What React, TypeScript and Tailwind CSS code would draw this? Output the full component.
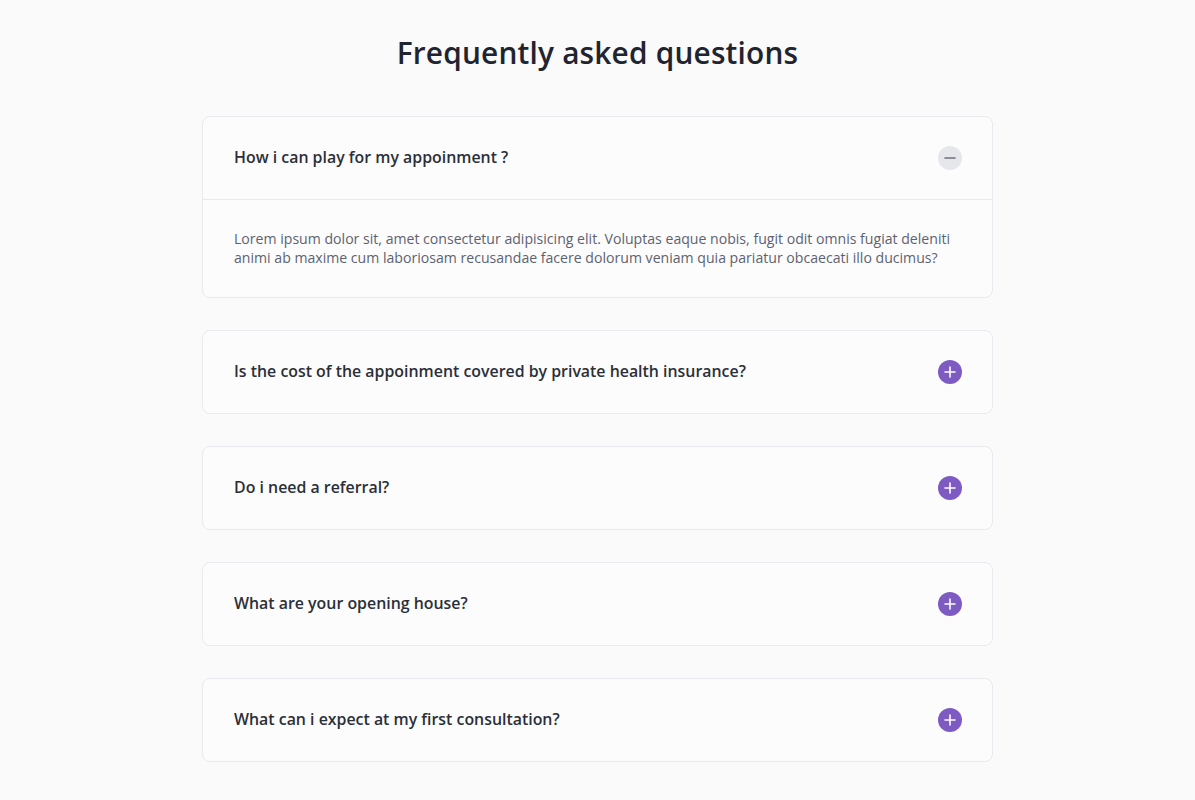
import { useState } from "react";

const answer =
  "Lorem ipsum dolor sit, amet consectetur adipisicing elit. Voluptas eaque nobis, fugit odit omnis fugiat deleniti animi ab maxime cum laboriosam recusandae facere dolorum veniam quia pariatur obcaecati illo ducimus?";

const faqs = [
  { q: "How i can play for my appoinment ?", a: answer },
  { q: "Is the cost of the appoinment covered by private health insurance?", a: answer },
  { q: "Do i need a referral?", a: answer },
  { q: "What are your opening house?", a: answer },
  { q: "What can i expect at my first consultation?", a: answer },
];

function ToggleIcon({ open }: { open: boolean }) {
  if (open) {
    return (
      <span className="w-6 h-6 rounded-full bg-[#e5e7eb] flex items-center justify-center">
        <svg width="12" height="12" viewBox="0 0 12 12">
          <path d="M1 6h10" stroke="#6b7280" strokeWidth="1.6" strokeLinecap="round" />
        </svg>
      </span>
    );
  }
  return (
    <span className="w-6 h-6 rounded-full bg-[#7e5bc2] flex items-center justify-center">
      <svg width="12" height="12" viewBox="0 0 12 12">
        <path d="M1 6h10M6 1v10" stroke="#ffffff" strokeWidth="1.6" strokeLinecap="round" />
      </svg>
    </span>
  );
}

export default function App() {
  const [openIndex, setOpenIndex] = useState<number | null>(0);

  return (
    <div
      className="min-h-screen bg-[#fafafa] pt-[34px] pb-10"
      style={{ fontFamily: "'Open Sans', 'Noto Sans', Arial, sans-serif" }}
    >
      <h1 className="text-center text-[29.8px] leading-[38px] font-semibold text-[#1f2430] tracking-[0.2px]">
        Frequently asked questions
      </h1>

      <div className="w-[791px] mx-auto mt-[44px] flex flex-col gap-[32px]">
        {faqs.map((item, i) => {
          const open = openIndex === i;
          return (
            <div key={i} className="bg-[#fcfcfd] border border-[#e9eaee] rounded-[8px]">
              <button
                className="w-full flex items-center justify-between pl-[31px] pr-[30px] h-[82px] text-left"
                onClick={() => setOpenIndex(open ? null : i)}
              >
                <span className="text-[15.9px] font-semibold text-[#2b2f38]">{item.q}</span>
                <ToggleIcon open={open} />
              </button>
              {open && (
                <div className="border-t border-[#e9eaee] pl-[31px] pr-[28px] pt-[30px] pb-[30px]">
                  <p className="text-[14.1px] leading-[18.5px] text-[#5d6270]">{item.a}</p>
                </div>
              )}
            </div>
          );
        })}
      </div>
    </div>
  );
}
